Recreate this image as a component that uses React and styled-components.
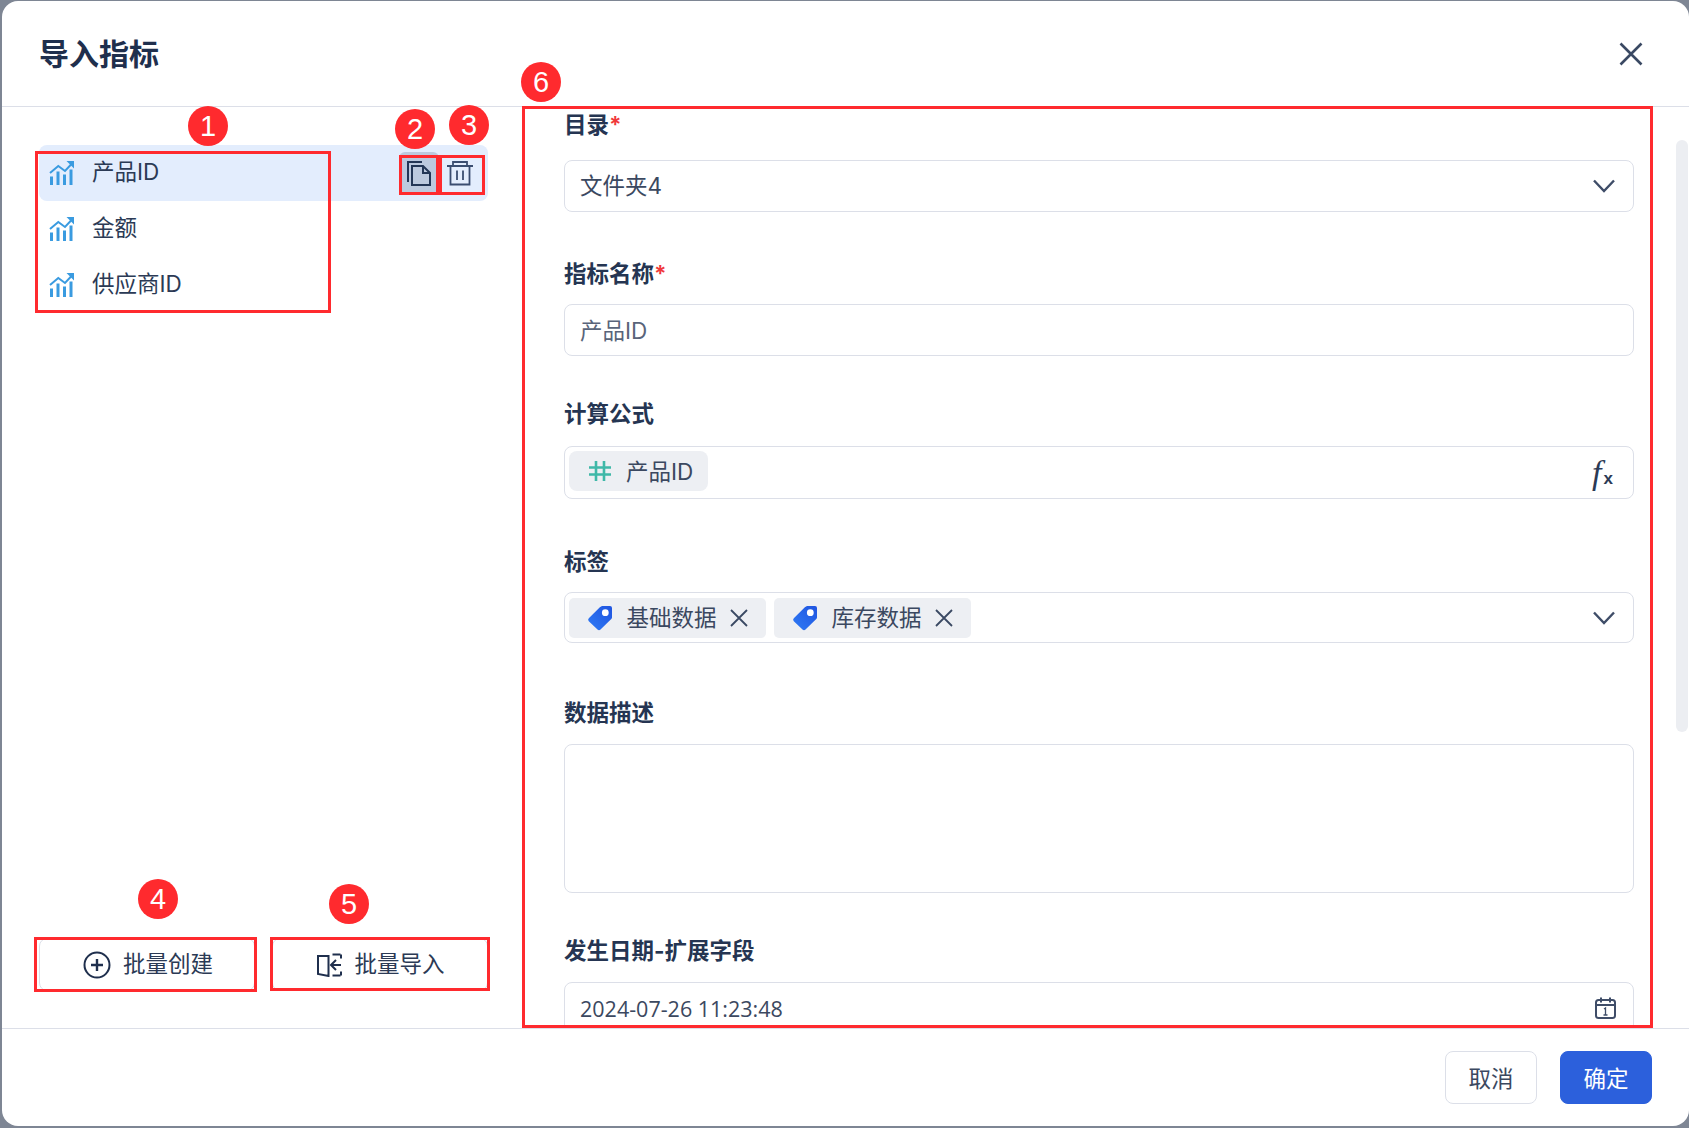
import React from 'react'
import styled, { createGlobalStyle } from 'styled-components'

const GlobalStyle = createGlobalStyle`
  html, body {
    margin: 0;
    padding: 0;
    background: #7e8694;
  }
  * {
    box-sizing: border-box;
  }
`

const Page = styled.div`
  position: relative;
  width: 1689px;
  height: 1128px;
  padding: 1px 0 2px 2px;
  overflow: hidden;
  background: #7e8694;
  font-family: Inter, "Noto Sans CJK SC", sans-serif;
  font-size: 22.5px;
  color: #2b3a55;
`

const Modal = styled.div`
  height: 100%;
  display: flex;
  flex-direction: column;
  background: #fff;
  border-radius: 16px;
  overflow: hidden;
`

const Header = styled.div`
  flex: none;
  height: 106px;
  padding: 0 46px 0 37px;
  display: flex;
  align-items: center;
  justify-content: space-between;
  border-bottom: 1px solid #dcdfe8;
`

const Title = styled.h1`
  margin: 0 0 4px;
  font-size: 30px;
  font-weight: 700;
  color: #1f2f4d;
`

const Body = styled.div`
  flex: 1;
  min-height: 0;
  display: flex;
`

const LeftPanel = styled.div`
  flex: none;
  width: 520px;
  padding: 38px 34px 37px 37px;
  display: flex;
  flex-direction: column;
  justify-content: space-between;
`

const Row = styled.div`
  height: 56px;
  padding: 0 8px 0 10px;
  display: flex;
  align-items: center;
  border-radius: 8px;
  background: ${props => (props.$active ? '#e3edfd' : 'transparent')};
`

const Value = styled.span`
  margin-bottom: ${props => (props.$lift || 0) * 2}px;
  margin-left: ${props => props.$left || 0}px;
`

const DateValue = styled.span`
  font-family: "Open Sans", sans-serif;
  font-size: 21.5px;
`

const RowActions = styled.div`
  margin-left: auto;
  display: flex;
  gap: 1px;
`

const ActionButton = styled.div`
  width: 40px;
  height: 43px;
  display: flex;
  align-items: center;
  justify-content: center;
  border-radius: 6px;
  background: ${props => (props.$active ? '#bcc9de' : 'transparent')};
`

const BatchButtons = styled.div`
  display: flex;
  gap: 17px;
`

const BatchButton = styled.div`
  width: 216px;
  height: 53px;
  padding-left: 2px;
  display: flex;
  align-items: center;
  justify-content: center;
  gap: 12px;
  border: 1px solid #dcdfe8;
  border-radius: 8px;
`

const RightPanel = styled.div`
  position: relative;
  flex: 1;
  min-width: 0;
  padding: 2px 0 0 42px;
  overflow: hidden;
`

const Field = styled.div`
  width: 1070px;
  margin-top: ${props => props.$top || 0}px;
`

const Label = styled.div`
  height: 32px;
  margin-bottom: ${props => props.$gap}px;
  line-height: 32px;
  font-weight: 700;
  color: #253552;
`

const Star = styled.span`
  color: #f0383b;
`

const Control = styled.div`
  height: ${props => props.$height}px;
  padding: ${props => props.$padding || '0 16px 0 15px'};
  display: flex;
  align-items: center;
  gap: 8px;
  border: 1px solid #dcdfe8;
  border-radius: 8px;
  color: ${props => (props.$muted ? '#59647a' : '#3b4860')};
`

const TrailingIcon = styled.span`
  margin-left: auto;
  display: flex;
  align-items: center;
  margin-right: ${props => props.$right || 0}px;
`

const Chip = styled.div`
  height: 40px;
  margin-bottom: ${props => props.$up || 0}px;
  padding: ${props => props.$padding};
  display: flex;
  align-items: center;
  gap: ${props => props.$gap}px;
  background: #edeff3;
  border-radius: ${props => props.$radius}px;
  color: #3b4860;
`

const FxMark = styled.span`
  font-family: "Liberation Serif", serif;
  font-style: italic;
  font-size: 34px;
  line-height: 1;
  color: #2b3a55;
`

const FxSub = styled.span`
  font-family: "Liberation Sans", sans-serif;
  font-style: normal;
  font-weight: 700;
  font-size: 17px;
  margin-left: 2px;
`

const Scrollbar = styled.div`
  position: absolute;
  top: 33px;
  right: 1px;
  width: 12px;
  height: 592px;
  border-radius: 6px;
  background: #eceef2;
`

const Footer = styled.div`
  flex: none;
  height: 98px;
  padding: 22px 37px 0 0;
  display: flex;
  justify-content: flex-end;
  align-items: flex-start;
  gap: 23px;
  border-top: 1px solid #dcdfe8;
`

const FooterButton = styled.div`
  width: 92px;
  height: 53px;
  display: flex;
  align-items: center;
  justify-content: center;
  border-radius: 8px;
  border: 1px solid ${props => (props.$primary ? '#2c60dc' : '#dcdfe8')};
  background: ${props => (props.$primary ? '#2c60dc' : '#fff')};
  color: ${props => (props.$primary ? '#fff' : '#3b4860')};
`

// the red marks drawn on top of the screenshot
const Callout = styled.div`
  position: absolute;
  left: ${props => props.$x}px;
  top: ${props => props.$y}px;
  width: ${props => props.$w}px;
  height: ${props => props.$h}px;
  border: 3px solid #ff2a2e;
  pointer-events: none;
`

const Badge = styled.div`
  position: absolute;
  left: ${props => props.$x - 20}px;
  top: ${props => props.$y - 20}px;
  width: 40px;
  height: 40px;
  display: flex;
  align-items: center;
  justify-content: center;
  border-radius: 50%;
  background: #ff2a2e;
  color: #fff;
  font-family: "Liberation Sans", sans-serif;
  font-size: 29px;
`

const ChartIcon = () => (
  <svg width="26" height="26" viewBox="-1 -1 26 26" fill="none">
    <path d="M1.500 24v-8.500M8 24v-13.500M14.500 24v-10.500M21 24v-15.500" stroke="#3a9be0" strokeWidth="3" />
    <path d="M0 12l8.300-7 6.700 5 7-7.500" stroke="#3a9be0" strokeWidth="2" />
    <path d="M16.500 0h7.500v7.500z" fill="#3a9be0" />
  </svg>
)

const CopyIcon = () => (
  <svg width="26" height="26" viewBox="0 0 26 26" fill="none" stroke="#233656" strokeWidth="2">
    <path d="M2 22V2h14" />
    <path d="M6 6h11l7 7v12H6z" />
    <path d="M17 6v7h7" />
  </svg>
)

const TrashIcon = () => (
  <svg width="28" height="26" viewBox="0 0 28 26" fill="none" stroke="#3a4d70" strokeWidth="1.800">
    <path d="M1 6h26M7 6V2h14v4" />
    <path d="M4.500 6v18.500h19V6" />
    <path d="M11 10.500v9.500M17 10.500v9.500" />
  </svg>
)

const PlusCircleIcon = () => (
  <svg width="28" height="28" viewBox="0 0 28 28" fill="none" stroke="#1f2f4d" strokeWidth="2">
    <circle cx="14" cy="14" r="12.500" />
    <path d="M14 8v12M8 14h12" strokeWidth="2.400" />
  </svg>
)

const ImportIcon = () => (
  <svg width="25" height="24" viewBox="0 0 25 24" fill="none" stroke="#1f2f4d" strokeWidth="2">
    <path d="M1 3h10.500v20l-10.500-2z" />
    <path d="M15.500 1.500h8M15.500 22.500h8M24 1.500v4M24 18.500v4" />
    <path d="M24 12h-9.500M19 7l-5 5 5 5" />
  </svg>
)

const ChevronIcon = () => (
  <svg width="22" height="14" viewBox="0 0 22 14" fill="none" stroke="#3f4d68" strokeWidth="2.400">
    <path d="M1 1.500l10 10.500 10-10.500" />
  </svg>
)

const CloseIcon = () => (
  <svg width="24" height="24" viewBox="0 0 24 24" fill="none" stroke="#3a4963" strokeWidth="2.600">
    <path d="M1.500 1.500l21 21M22.500 1.500l-21 21" />
  </svg>
)

const HashIcon = () => (
  <svg width="22" height="22" viewBox="0 0 22 22" fill="none" stroke="#3fb8a8" strokeWidth="2.600">
    <path d="M7 1v20M15 1v20M0 7.500h22M0 14.500h22" />
  </svg>
)

const TagIcon = ({ id }) => (
  <svg width="26" height="26" viewBox="0 0 26 26">
    <defs>
      <linearGradient id={id} x1="0" y1="1" x2="1" y2="0">
        <stop offset="0" stopColor="#2f7bf5" />
        <stop offset="1" stopColor="#1f54e0" />
      </linearGradient>
    </defs>
    <path
      fill={`url(#${id})`}
      d="M14.500 1h8.500a2 2 0 0 1 2 2v9.500a2 2 0 0 1-.7 1.500l-10.800 10.500a2.200 2.200 0 0 1-3 0l-8.700-8.300a2.200 2.200 0 0 1 0-3l11.300-11.100a2 2 0 0 1 1.400-.6z"
    />
    <circle cx="18.300" cy="7.700" r="3.400" fill="#fff" />
  </svg>
)

const SmallX = () => (
  <svg width="18" height="18" viewBox="0 0 18 18" fill="none" stroke="#3a4963" strokeWidth="1.800">
    <path d="M1 1l16 16M17 1l-16 16" />
  </svg>
)

const CalendarIcon = () => (
  <svg width="21" height="22" viewBox="0 0 21 22" fill="none" stroke="#3f4d68" strokeWidth="2">
    <rect x="1" y="3" width="19" height="18" rx="2.500" />
    <path d="M1 8h19M6 0.500v5M15 0.500v5" />
    <path d="M9 12l1.500-1v7M8.500 18h4" strokeWidth="1.300" />
  </svg>
)

const metrics = ['产品ID', '金额', '供应商ID']

const tags = ['基础数据', '库存数据']

const callouts = [
  { x: 35, y: 151, w: 296, h: 162 },
  { x: 399, y: 155, w: 40, h: 40 },
  { x: 439, y: 155, w: 46, h: 40 },
  { x: 34, y: 937, w: 223, h: 55 },
  { x: 270, y: 937, w: 220, h: 54 },
  { x: 522, y: 106, w: 1131, h: 922 },
]

const badges = [
  { n: 1, x: 208, y: 126 },
  { n: 2, x: 415, y: 129 },
  { n: 3, x: 469, y: 125 },
  { n: 4, x: 158, y: 899 },
  { n: 5, x: 349, y: 904 },
  { n: 6, x: 541, y: 82 },
]

const App = () => {
  return (
    <Page>
      <GlobalStyle />
      <Modal>
        <Header>
          <Title>导入指标</Title>
          <CloseIcon />
        </Header>
        <Body>
          <LeftPanel>
            <div>
              {metrics.map((name, i) => (
                <Row key={name} $active={i === 0}>
                  <ChartIcon />
                  <Value $lift={3} $left={17}>{name}</Value>
                  {i === 0 && (
                    <RowActions>
                      <ActionButton $active><CopyIcon /></ActionButton>
                      <ActionButton><TrashIcon /></ActionButton>
                    </RowActions>
                  )}
                </Row>
              ))}
            </div>
            <BatchButtons>
              <BatchButton><PlusCircleIcon /><Value $lift={3}>批量创建</Value></BatchButton>
              <BatchButton><ImportIcon /><Value $lift={3}>批量导入</Value></BatchButton>
            </BatchButtons>
          </LeftPanel>
          <RightPanel>
            <Field>
              <Label $gap={19}>目录<Star>*</Star></Label>
              <Control $height={52}>
                <Value $lift={2}>文件夹4</Value>
                <TrailingIcon $right={2}><ChevronIcon /></TrailingIcon>
              </Control>
            </Field>
            <Field $top={46}>
              <Label $gap={14}>指标名称<Star>*</Star></Label>
              <Control $height={52} $muted><Value $lift={1}>产品ID</Value></Control>
            </Field>
            <Field $top={42}>
              <Label $gap={16}>计算公式</Label>
              <Control $height={53} $padding="0 20px 0 4px">
                <Chip $padding="0 15px 0 20px" $gap={15} $radius={8} $up={3}>
                  <HashIcon />
                  <Value $lift={1}>产品ID</Value>
                </Chip>
                <TrailingIcon><FxMark>f<FxSub>x</FxSub></FxMark></TrailingIcon>
              </Control>
            </Field>
            <Field $top={47}>
              <Label $gap={14}>标签</Label>
              <Control $height={51} $padding="0 18px 0 4px">
                {tags.map((tag, i) => (
                  <Chip key={tag} $padding="0 18px 0 18px" $gap={13.5} $radius={5}>
                    <TagIcon id={`tag-${i}`} />
                    <Value $lift={2}>{tag}</Value>
                    <SmallX />
                  </Chip>
                ))}
                <TrailingIcon><ChevronIcon /></TrailingIcon>
              </Control>
            </Field>
            <Field $top={54}>
              <Label $gap={15}>数据描述</Label>
              <Control $height={149} />
            </Field>
            <Field $top={42}>
              <Label $gap={15}>发生日期-扩展字段</Label>
              <Control $height={52}>
                <DateValue>2024-07-26 11:23:48</DateValue>
                <TrailingIcon $right={1}><CalendarIcon /></TrailingIcon>
              </Control>
            </Field>
            <Scrollbar />
          </RightPanel>
        </Body>
        <Footer>
          <FooterButton><Value $lift={1}>取消</Value></FooterButton>
          <FooterButton $primary><Value $lift={1}>确定</Value></FooterButton>
        </Footer>
      </Modal>
      {callouts.map((c, i) => (
        <Callout key={i} $x={c.x} $y={c.y} $w={c.w} $h={c.h} />
      ))}
      {badges.map(b => (
        <Badge key={b.n} $x={b.x} $y={b.y}>{b.n}</Badge>
      ))}
    </Page>
  )
}

export default App
